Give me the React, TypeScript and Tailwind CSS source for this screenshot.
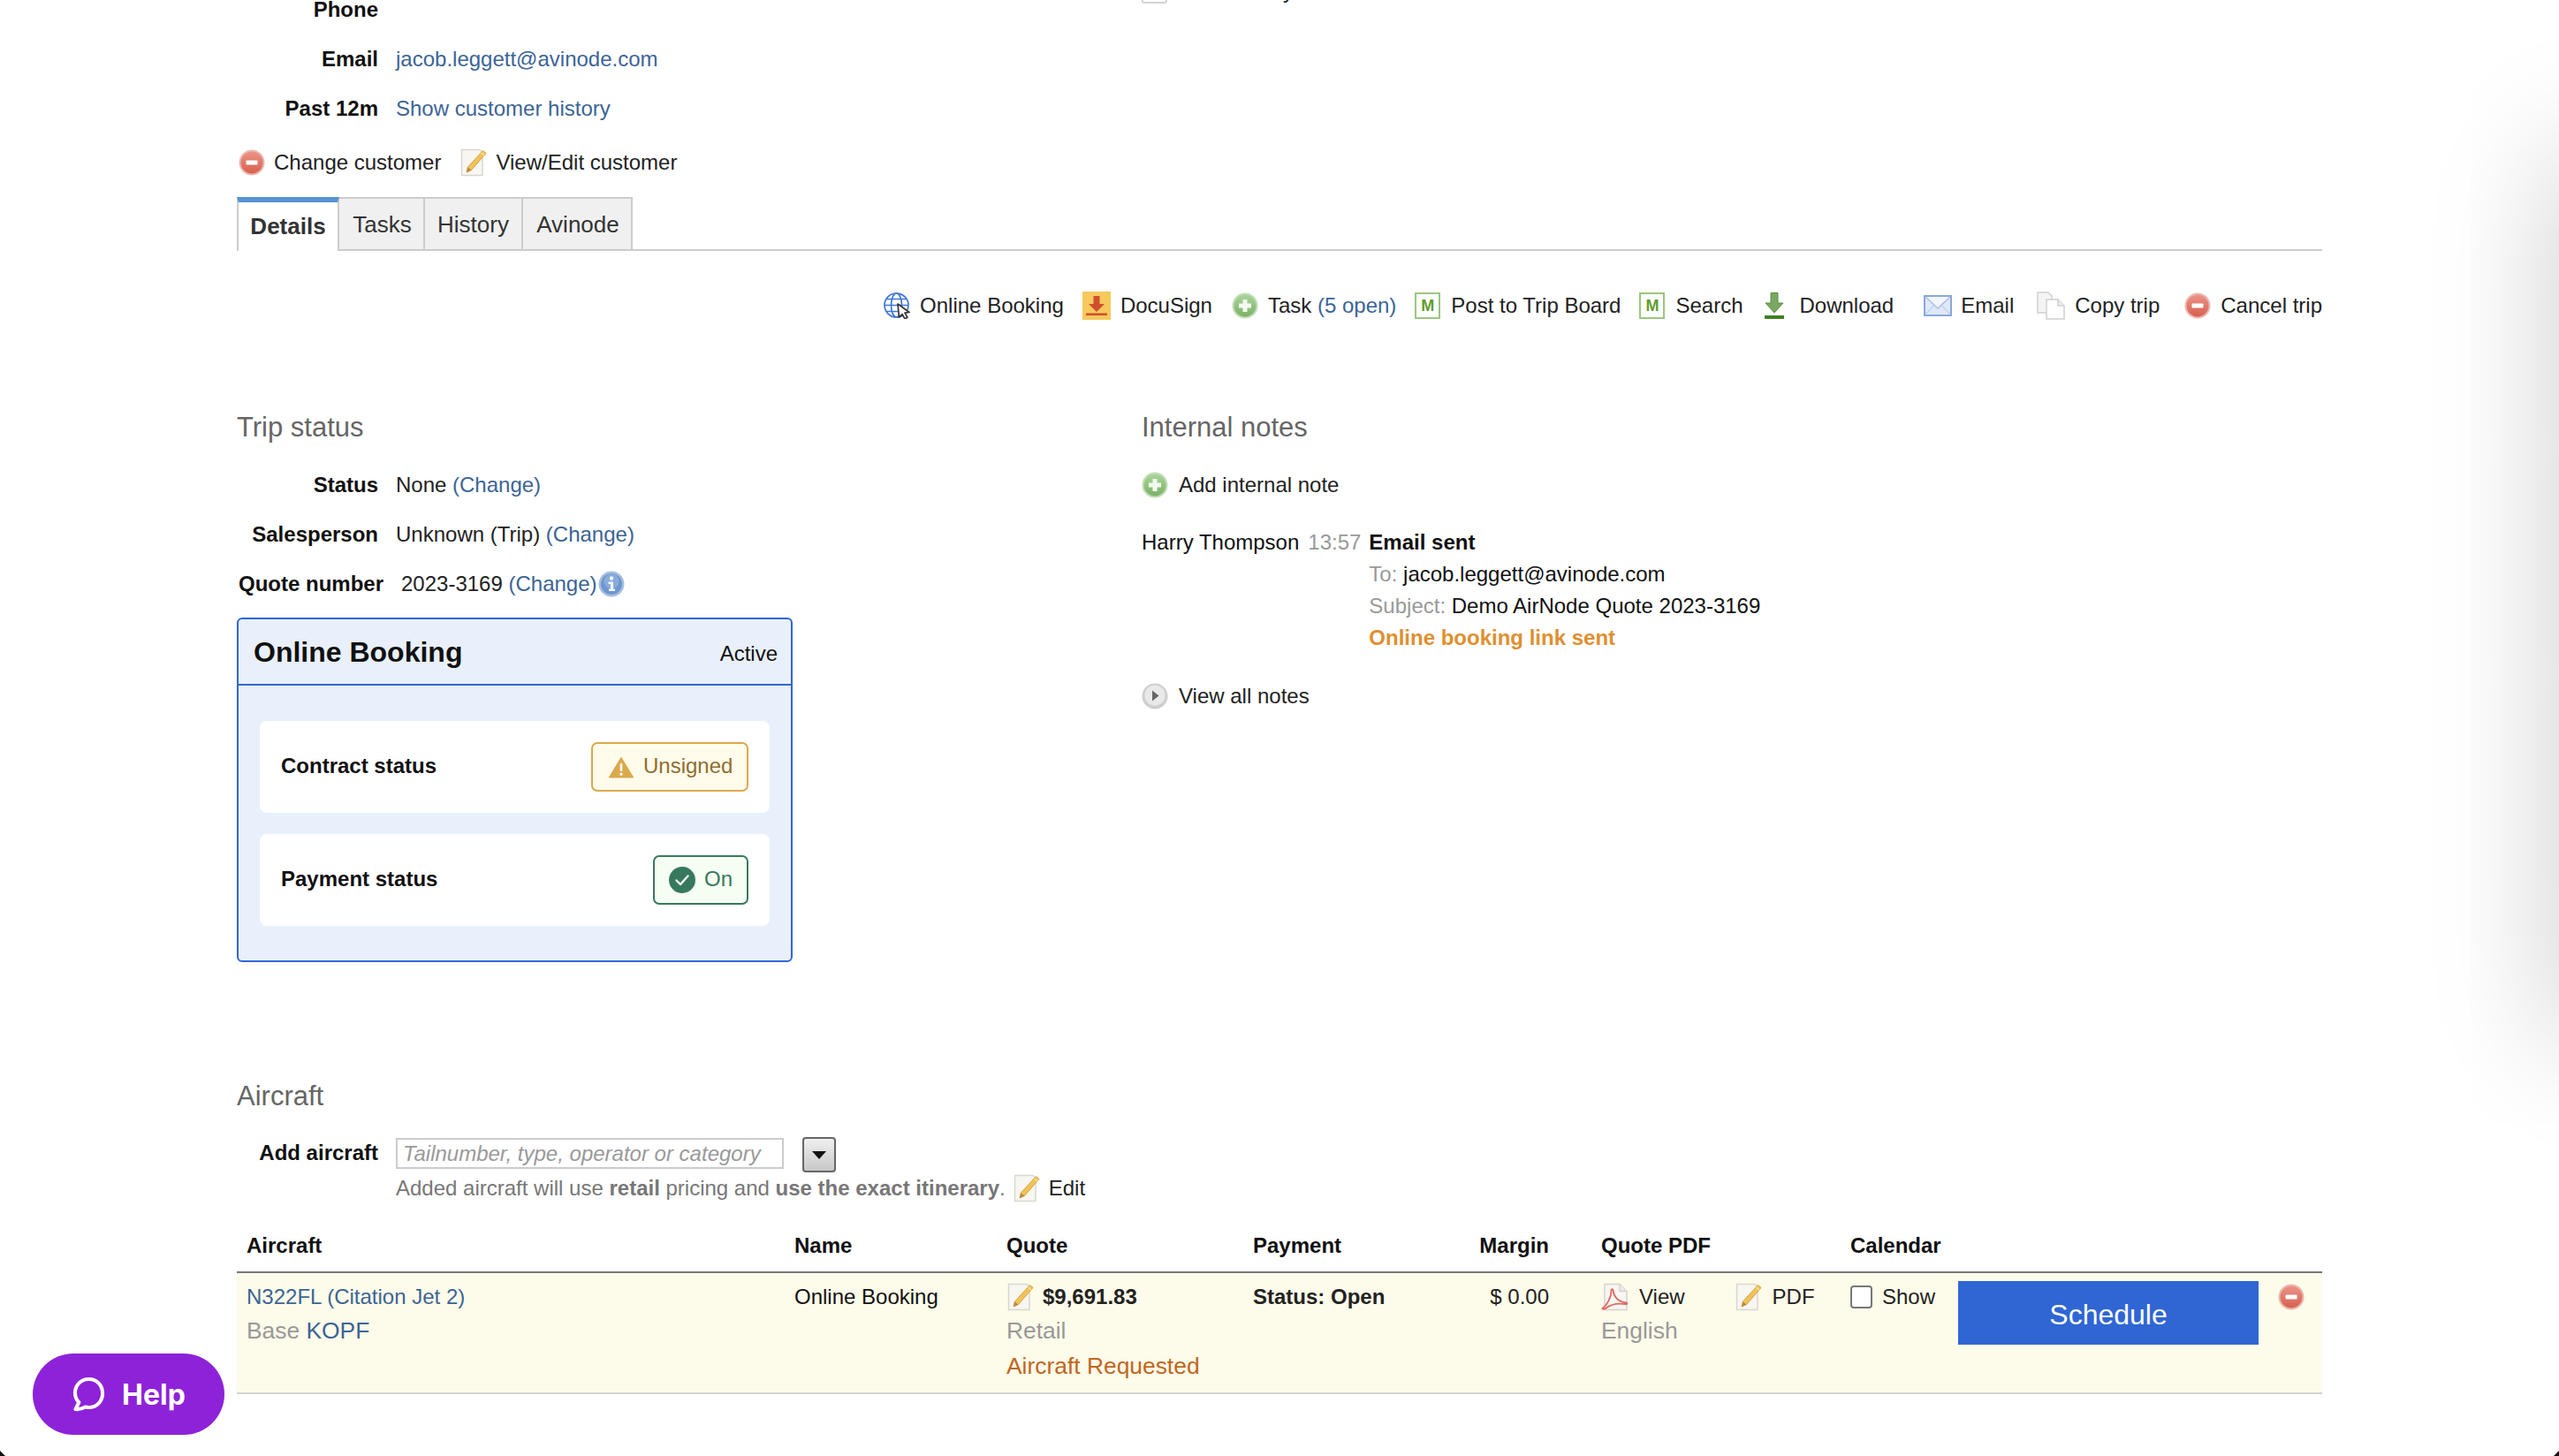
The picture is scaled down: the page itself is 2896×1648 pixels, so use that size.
import React from "react";

const COLS = "grid grid-cols-[620px_240px_279px_200px_194px_282px_122px_362px_1fr] pl-[11px]";

function MinusIcon({ className = "" }: { className?: string }) {
  return (
    <svg viewBox="0 0 30 30" className={`h-[30px] w-[30px] shrink-0 ${className}`}>
      <defs>
        <linearGradient id="redBody" x1="0" y1="0" x2="0" y2="1">
          <stop offset="0" stopColor="#eb9488" />
          <stop offset="1" stopColor="#d8604f" />
        </linearGradient>
      </defs>
      <circle cx="15" cy="15" r="14.500" fill="#eab9b1" />
      <circle cx="15" cy="15" r="12.500" fill="url(#redBody)" />
      <rect x="8.500" y="12.500" width="13" height="5" rx="1" fill="#fff" />
    </svg>
  );
}

function PlusIcon({ className = "" }: { className?: string }) {
  return (
    <svg viewBox="0 0 30 30" className={`h-[30px] w-[30px] shrink-0 ${className}`}>
      <defs>
        <linearGradient id="greenBody" x1="0" y1="0" x2="0" y2="1">
          <stop offset="0" stopColor="#aad59a" />
          <stop offset="1" stopColor="#7bb267" />
        </linearGradient>
      </defs>
      <circle cx="15" cy="15" r="14.500" fill="#c3ddb7" />
      <circle cx="15" cy="15" r="12.500" fill="url(#greenBody)" />
      <path d="M12.500 8h5v4.500H22v5h-4.500V22h-5v-4.500H8v-5h4.500z" fill="#f4faf0" />
    </svg>
  );
}

function PlayIcon() {
  return (
    <svg viewBox="0 0 30 30" className="h-[30px] w-[30px] shrink-0">
      <circle cx="15" cy="15" r="14.500" fill="#cfcfcf" />
      <circle cx="15" cy="14" r="11.500" fill="#e9e9e9" />
      <path d="M12 8.500 19.500 14.500 12 20.500z" fill="#666" />
    </svg>
  );
}

function PencilDoc({ className = "" }: { className?: string }) {
  return (
    <svg viewBox="0 0 32 32" className={`h-[32px] w-[32px] shrink-0 ${className}`}>
      <path d="M2.500 1.500H23l3 3v26H2.500z" fill="#f7f6f1" stroke="#d9d7cf" strokeWidth="1.500" />
      <path d="M26.500 2.500 30 5.500 13.500 24.500 8 27l1.400-5.800z" fill="#efc35a" stroke="#d7a23c" strokeWidth="1" />
      <path d="M9.400 21.200 13.500 24.500 8 27z" fill="#b98a4a" />
      <path d="M24.500 5 28 8" stroke="#f9e39d" strokeWidth="1.500" />
    </svg>
  );
}

function PdfIcon() {
  return (
    <svg viewBox="0 0 32 32" className="h-[32px] w-[32px] shrink-0">
      <path d="M4 1.500H21l8 8v21H4z" fill="#f7f6f3" stroke="#d6d3cb" strokeWidth="1.500" />
      <path d="M21 1.500V9.500H29" fill="#ecebe6" stroke="#d6d3cb" strokeWidth="1.500" />
      <path
        d="M1.500 29C7 25 11.500 16 11.500 9c0-2.500 2-2.500 2.200 0C14 15 19 21.500 28 22.500c2 .3 1.500 2-.5 1.700C20 23 12 23.500 5 29c-1.500 1.300-4 1-3.500 0z"
        fill="none"
        stroke="#dc6a62"
        strokeWidth="1.800"
      />
    </svg>
  );
}

function GlobeIcon() {
  return (
    <svg viewBox="0 0 30 30" className="h-[30px] w-[30px] shrink-0">
      <g fill="none" stroke="#3f77d8" strokeWidth="1.700">
        <circle cx="14.500" cy="14.500" r="13.500" />
        <ellipse cx="14.500" cy="14.500" rx="6" ry="13.500" />
        <path d="M1 14.500h27M3 7.500h23M3 21.500h23" />
      </g>
      <path d="M16 13 29 22.500l-5 .6 3 5.200-3 1.700-2.900-5.300L17.500 28z" fill="#fff" stroke="#333" strokeWidth="1.700" strokeLinejoin="round" />
    </svg>
  );
}

function DocuIcon() {
  return (
    <svg viewBox="0 0 32 32" className="h-[32px] w-[32px] shrink-0">
      <rect width="32" height="32" fill="#f6c95c" />
      <path d="M12.500 5h7v9H25l-9 9-9-9h5.500z" fill="#cf4f2e" />
      <rect x="4" y="24.500" width="24" height="2.500" fill="#cf4f2e" />
    </svg>
  );
}

function MIcon() {
  return (
    <span className="flex h-[30px] w-[29px] shrink-0 items-center justify-center border-2 border-[#9cc67f] bg-white text-[18px] font-bold leading-none text-[#5f9c2c]">
      M
    </span>
  );
}

function DownloadIcon() {
  return (
    <svg viewBox="0 0 22 30" className="h-[30px] w-[22px] shrink-0">
      <path d="M7 0.500h8V12h6L11 23 1 12h6z" fill="#7aa863" stroke="#5b9143" strokeWidth="1" />
      <rect y="26" width="22" height="4" fill="#3f8122" />
    </svg>
  );
}

function MailIcon() {
  return (
    <svg viewBox="0 0 32 24" className="h-[24px] w-[32px] shrink-0">
      <rect x="1" y="1" width="30" height="22" fill="#dfe9fa" stroke="#8aa7da" strokeWidth="2" />
      <path d="M2 2 16 15 30 2" fill="#f2f6fd" stroke="#a8bfe6" strokeWidth="1.500" />
      <path d="M2 22 12 11M30 22 20 11" stroke="#bfd0ee" strokeWidth="1.200" />
    </svg>
  );
}

function CopyIcon() {
  return (
    <svg viewBox="0 0 32 32" className="h-[32px] w-[32px] shrink-0">
      <path d="M1 1h12l4 4v19H1z" fill="#f4f4f4" stroke="#cfcfcf" strokeWidth="1.500" />
      <path d="M11 9h13l7 7v15H11z" fill="#fff" stroke="#cfcfcf" strokeWidth="1.500" />
      <path d="M24 9v7h7" fill="#eee" stroke="#cfcfcf" strokeWidth="1.500" />
    </svg>
  );
}

function InfoIcon() {
  return (
    <svg viewBox="0 0 30 30" className="ml-[1px] h-[30px] w-[30px] shrink-0">
      <circle cx="15" cy="15" r="14.500" fill="#a9bfdf" />
      <circle cx="15" cy="15" r="12" fill="#6f97cf" />
      <circle cx="15" cy="12" r="8.500" fill="#8aacdb" />
      <circle cx="15" cy="8.500" r="2.200" fill="#f3f7fc" />
      <path d="M11.500 12.500h5.500v8h2v2.500h-7v-2.500h2v-5.500h-2.500z" fill="#f3f7fc" />
    </svg>
  );
}

function WarningIcon() {
  return (
    <svg viewBox="0 0 30 26" className="h-[26px] w-[30px] shrink-0">
      <path d="M15 1.500 29 24.500a.8.800 0 0 1-.7 1H1.700a.8.800 0 0 1-.7-1z" fill="#dba84c" />
      <rect x="13.700" y="9" width="2.600" height="9" rx="1.200" fill="#fff" />
      <circle cx="15" cy="21.300" r="1.700" fill="#fff" />
    </svg>
  );
}

function CheckIcon() {
  return (
    <svg viewBox="0 0 30 30" className="h-[30px] w-[30px] shrink-0">
      <circle cx="15" cy="15" r="15" fill="#37795c" />
      <path d="M8.500 15.500 13 20l8.500-9.500" fill="none" stroke="#fff" strokeWidth="2.400" strokeLinecap="round" strokeLinejoin="round" />
    </svg>
  );
}

function ChatIcon() {
  return (
    <svg viewBox="0 0 38 42" className="h-[41px] w-[37px] shrink-0">
      <path
        d="M19 3C9.600 3 3 10.300 3 19c0 4.300 1.600 8.100 4.500 11L3.500 38c3.700.4 7.800-.500 11.500-2.600 1.300.3 2.600.5 4 .5 9.400 0 16-7.200 16-16.400C35 10.300 28.400 3 19 3z"
        fill="none"
        stroke="#fff"
        strokeWidth="4.200"
        strokeLinejoin="round"
      />
    </svg>
  );
}

function Action({ icon, children, className = "" }: { icon: React.ReactNode; children: React.ReactNode; className?: string }) {
  return (
    <span className={`flex items-center whitespace-nowrap ${className}`}>
      {icon}
      {children}
    </span>
  );
}

function Row({ label, children }: { label: string; children: React.ReactNode }) {
  return (
    <div className="flex h-[56px] items-center">
      <span className="w-[160px] text-right font-bold text-[#111]">{label}</span>
      <span className="ml-[20px] flex items-center whitespace-nowrap text-[#222]">{children}</span>
    </div>
  );
}

const Link = ({ children }: { children: React.ReactNode }) => <span className="text-[#3c6496]">{children}</span>;

export default function App() {
  return (
    <div className="relative h-[1648px] w-[2896px] overflow-hidden bg-white font-['Liberation_Sans',Arial,sans-serif] text-[24px] text-[#222]">
      <div className="mx-[268px] -mt-[17px] flex w-[2360px] flex-col">
        {/* Customer */}
        <div className="flex">
          <div className="w-[1024px]">
            <Row label="Phone"> </Row>
            <Row label="Email">
              <Link>jacob.leggett@avinode.com</Link>
            </Row>
            <Row label="Past 12m">
              <Link>Show customer history</Link>
            </Row>
          </div>
          {/* Row of the right column, scrolled almost entirely out of the picture */}
          <div className="-mt-[11px] flex h-[32px] items-start">
            <span className="h-[32px] w-[29px] rounded-[3px] border-2 border-[#d4d4d4] bg-white" />
            <span className="ml-[131px] leading-[36px] text-[#222]">y</span>
          </div>
        </div>

        <div className="mt-[5px] flex h-[56px] items-center pl-[2px]">
          <Action icon={<MinusIcon className="mr-[10px]" />}>Change customer</Action>
          <Action className="ml-[21px]" icon={<PencilDoc className="mr-[9px]" />}>
            View/Edit customer
          </Action>
        </div>

        {/* Tabs */}
        <div className="mt-[11px] flex h-[61px] border-b-2 border-[#ccc] text-[26px] text-[#333]">
          <div className="z-10 -mb-[2px] flex h-[61px] w-[116px] items-start justify-center border-x-2 border-t-[6px] border-x-[#ccc] border-t-[#5693cf] bg-white pt-[12px] font-bold leading-[30px]">
            Details
          </div>
          <div className="-ml-[2px] flex w-[99px] justify-center border-2 border-b-0 border-[#ccc] bg-[#f0f0f0] pl-[2px] pt-[14px] leading-[30px]">Tasks</div>
          <div className="-ml-[2px] flex w-[113px] justify-center border-2 border-b-0 border-[#ccc] bg-[#f0f0f0] pt-[14px] leading-[30px]">History</div>
          <div className="-ml-[2px] flex w-[126px] justify-center border-2 border-b-0 border-[#ccc] bg-[#f0f0f0] pl-[2px] pt-[14px] leading-[30px]">Avinode</div>
        </div>

        {/* Toolbar */}
        <div className="mt-[34px] flex h-[56px] items-center justify-end">
          <Action icon={<GlobeIcon />}>
            <span className="ml-[11px]">Online Booking</span>
          </Action>
          <Action className="ml-[21px]" icon={<DocuIcon />}>
            <span className="ml-[11px]">DocuSign</span>
          </Action>
          <Action className="ml-[22px]" icon={<PlusIcon />}>
            <span className="ml-[11px]">
              Task <Link>(5 open)</Link>
            </span>
          </Action>
          <Action className="ml-[21px]" icon={<MIcon />}>
            <span className="ml-[12px]">Post to Trip Board</span>
          </Action>
          <Action className="ml-[21px]" icon={<MIcon />}>
            <span className="ml-[12px]">Search</span>
          </Action>
          <Action className="ml-[25px]" icon={<DownloadIcon />}>
            <span className="ml-[17px]">Download</span>
          </Action>
          <Action className="ml-[34px]" icon={<MailIcon />}>
            <span className="ml-[10px]">Email</span>
          </Action>
          <Action className="ml-[26px]" icon={<CopyIcon />}>
            <span className="ml-[11px]">Copy trip</span>
          </Action>
          <Action className="ml-[28px]" icon={<MinusIcon />}>
            <span className="ml-[11px]">Cancel trip</span>
          </Action>
        </div>

        {/* Status and notes */}
        <div className="mt-[89px] flex">
          <div className="w-[1024px]">
            <h2 className="h-[40px] text-[31px] leading-[42px] text-[#666]">Trip status</h2>
            <div className="mt-[18px]">
              <Row label="Status">
                None&nbsp;<Link>(Change)</Link>
              </Row>
              <Row label="Salesperson">
                Unknown (Trip)&nbsp;<Link>(Change)</Link>
              </Row>
              <div className="flex h-[56px] items-center pl-[2px]">
                <span className="font-bold text-[#111]">Quote number</span>
                <span className="ml-[20px] flex items-center whitespace-nowrap">
                  2023-3169&nbsp;<Link>(Change)</Link>
                  <InfoIcon />
                </span>
              </div>
            </div>

            <div className="mt-[10px] h-[390px] w-[629px] rounded-[6px] border-2 border-[#2f66d4] bg-[#e9f0fb]">
              <div className="flex h-[75px] items-center justify-between border-b-2 border-[#2f66d4] pl-[17px] pr-[15px] text-[#111]">
                <span className="text-[32px] font-bold leading-[40px]">Online Booking</span>
                <span className="mt-[4px]">Active</span>
              </div>
              <div className="flex flex-col gap-[24px] px-[24px] pt-[40px]">
                <div className="flex h-[104px] items-center justify-between rounded-[8px] bg-white pl-[24px] pr-[24px]">
                  <span className="-mt-[2px] font-bold text-[#111]">Contract status</span>
                  <span className="flex h-[56px] w-[178px] items-center rounded-[7px] border-2 border-[#dba84c] bg-[#fffceb] pl-[17px] text-[#8f6c2e]">
                    <WarningIcon />
                    <span className="-mt-[3px] ml-[10px]">Unsigned</span>
                  </span>
                </div>
                <div className="flex h-[104px] items-center justify-between rounded-[8px] bg-white pl-[24px] pr-[24px]">
                  <span className="-mt-[2px] font-bold text-[#111]">Payment status</span>
                  <span className="flex h-[56px] w-[108px] items-center rounded-[7px] border-2 border-[#37795c] bg-[#f6fdf3] pl-[16px] text-[#37795c]">
                    <CheckIcon />
                    <span className="-mt-[3px] ml-[10px]">On</span>
                  </span>
                </div>
              </div>
            </div>
          </div>

          <div className="flex-1">
            <h2 className="h-[40px] text-[31px] leading-[42px] text-[#666]">Internal notes</h2>
            <div className="mt-[18px] flex h-[56px] items-center">
              <PlusIcon />
              <span className="ml-[12px]">Add internal note</span>
            </div>
            <div className="mt-[19px] flex leading-[36px]">
              <span className="whitespace-nowrap text-[#111]">Harry Thompson</span>
              <span className="ml-[10px] text-[#999]">13:57</span>
              <div className="ml-[9px] text-[#111]">
                <div className="font-bold">Email sent</div>
                <div>
                  <span className="text-[#999]">To:</span> jacob.leggett@avinode.com
                </div>
                <div>
                  <span className="text-[#999]">Subject:</span> Demo AirNode Quote 2023-3169
                </div>
                <div className="font-bold text-[#e08f2f]">Online booking link sent</div>
              </div>
            </div>
            <div className="mt-[20px] flex h-[56px] items-center">
              <PlayIcon />
              <span className="ml-[12px]">View all notes</span>
            </div>
          </div>
        </div>

        {/* Aircraft */}
        <h2 className="mt-[131px] h-[40px] text-[31px] leading-[42px] text-[#666]">Aircraft</h2>
        <div className="mt-[27px] flex h-[40px] items-start">
          <span className="w-[160px] text-right font-bold leading-[36px] text-[#111]">Add aircraft</span>
          <div className="ml-[20px] mt-[1px] flex h-[35px] w-[439px] items-center border-2 border-[#ccc] bg-white pl-[6px] italic text-[#999]">
            Tailnumber, type, operator or category
          </div>
          <div className="ml-[21px] flex h-[40px] w-[38px] items-center justify-center rounded-[4px] border-2 border-[#666] bg-gradient-to-b from-[#f0f0f0] to-[#c8c8c8]">
            <svg viewBox="0 0 16 9" className="h-[9px] w-[16px]">
              <path d="M0 0h16L8 9z" fill="#111" />
            </svg>
          </div>
        </div>
        <div className="flex h-[36px] items-center pl-[180px] text-[#777]">
          <span className="whitespace-nowrap">
            Added aircraft will use <b>retail</b> pricing and <b>use the exact itinerary</b>.
          </span>
          <PencilDoc className="ml-[8px]" />
          <span className="ml-[9px] text-[#222]">Edit</span>
        </div>

        {/* Table */}
        <div className={`${COLS} mt-[29px] border-b-2 border-[#777] pb-[11px] font-bold leading-[36px] text-[#111]`}>
          <span>Aircraft</span>
          <span>Name</span>
          <span>Quote</span>
          <span>Payment</span>
          <span className="pr-[59px] text-right">Margin</span>
          <span>Quote PDF</span>
          <span>Calendar</span>
          <span />
          <span />
        </div>
        <div className={`${COLS} h-[137px] border-b-2 border-[#d4d4d4] bg-[#fdfbe9] pt-[9px] leading-[36px]`}>
          <div>
            <Link>N322FL (Citation Jet 2)</Link>
            <div className="text-[26.4px] leading-[40px] text-[#999]">
              Base <Link>KOPF</Link>
            </div>
          </div>
          <div className="text-[#111]">Online Booking</div>
          <div>
            <div className="flex h-[36px] items-center">
              <PencilDoc />
              <span className="ml-[9px] font-bold">$9,691.83</span>
            </div>
            <div className="text-[26.4px] leading-[40px] text-[#999]">Retail</div>
            <div className="text-[26.4px] leading-[40px] text-[#c0661e]">Aircraft Requested</div>
          </div>
          <div className="font-bold">Status: Open</div>
          <div className="pr-[59px] text-right">$ 0.00</div>
          <div>
            <div className="flex h-[36px] items-center">
              <PdfIcon />
              <span className="ml-[11px]">View</span>
              <span className="ml-[56px] flex items-center">
                <PencilDoc />
                <span className="ml-[11px]">PDF</span>
              </span>
            </div>
            <div className="text-[26.4px] leading-[40px] text-[#999]">English</div>
          </div>
          <div className="flex h-[36px] items-center">
            <span className="h-[26px] w-[25px] rounded-[4px] border-2 border-[#777] bg-white" />
            <span className="ml-[11px]">Show</span>
          </div>
          <div className="flex h-[72px] w-[340px] items-center justify-center bg-[#2f66d4] pt-[3px] text-[32px] text-white">Schedule</div>
          <div className="mt-[3px]">
            <MinusIcon />
          </div>
        </div>
      </div>

      {/* Help launcher */}
      <div className="absolute left-[37px] top-[1532px] flex h-[92px] w-[217px] items-center rounded-[46px] bg-[#8e22d9] pl-[45px] font-['Inter',sans-serif] text-[32px] font-bold text-white">
        <ChatIcon />
        <span className="ml-[19px] mt-[1px]">Help</span>
      </div>

      {/* Shadow of the off-screen panel */}
      <div className="absolute left-[2896px] top-[175px] h-[1000px] w-[200px] shadow-[0_0_150px_rgba(0,0,0,0.21)]" />

      {/* Window corners */}
      <svg viewBox="0 0 6 6" className="absolute bottom-0 left-0 h-[6px] w-[6px]">
        <path d="M0 0 6 6H0z" fill="#111" />
      </svg>
      <svg viewBox="0 0 6 6" className="absolute bottom-0 right-0 h-[6px] w-[6px]">
        <path d="M6 0V6H0z" fill="#111" />
      </svg>
    </div>
  );
}
